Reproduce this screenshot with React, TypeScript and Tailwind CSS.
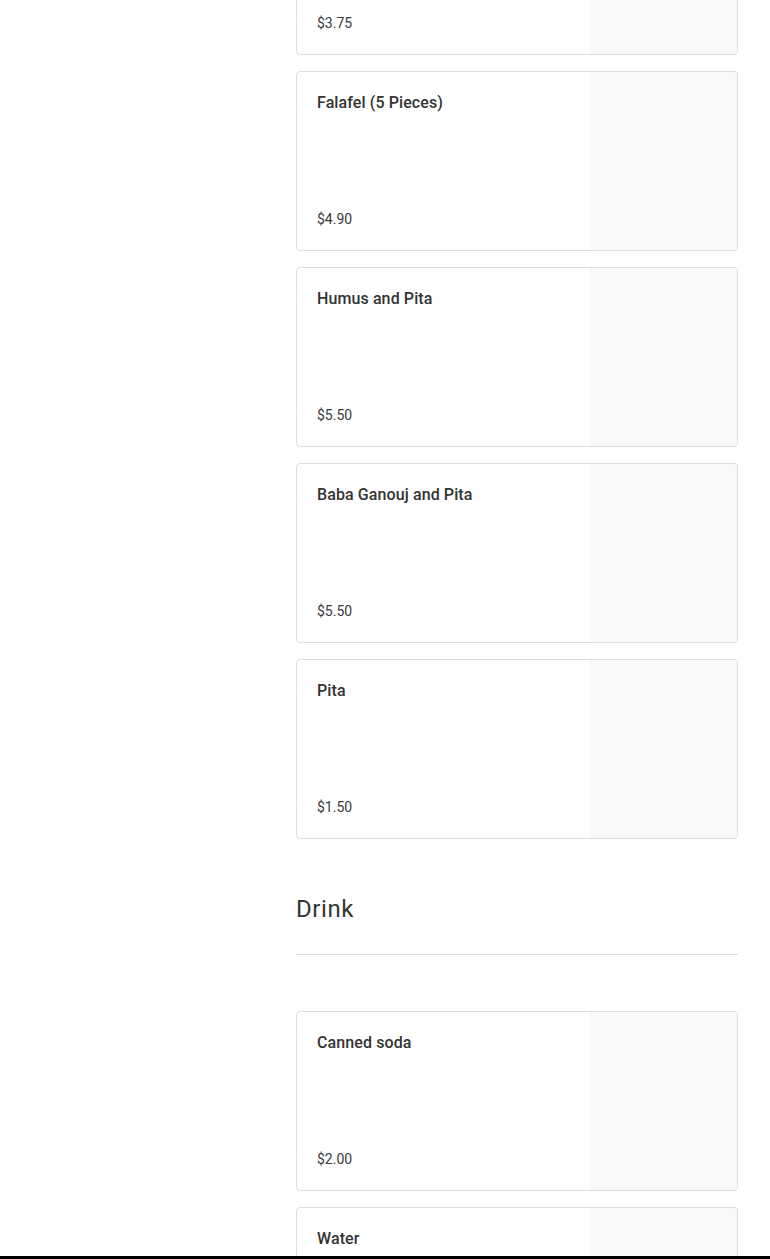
const food = [
  { name: "Shawarma Wrap", price: "$3.75" },
  { name: "Falafel (5 Pieces)", price: "$4.90" },
  { name: "Humus and Pita", price: "$5.50" },
  { name: "Baba Ganouj and Pita", price: "$5.50" },
  { name: "Pita", price: "$1.50" },
];

const drinks = [
  { name: "Canned soda", price: "$2.00" },
  { name: "Water", price: "$1.00" },
];

function ItemCard({ name, price }: { name: string; price: string }) {
  return (
    <div className="flex h-[180px] w-full rounded-[4px] border border-[#dedede] bg-white">
      <div className="flex flex-1 flex-col justify-between p-5 pt-[21px] pb-[21px]">
        <h3 className="text-base font-medium leading-5 tracking-[0.1px] text-[#333]">{name}</h3>
        <p className="text-sm leading-5 text-[#3a3a3a]">{price}</p>
      </div>
      <div className="w-[147px] rounded-r-[4px] bg-[#f8f9fb]"></div>
    </div>
  );
}

export default function App() {
  return (
    <div
      className="relative h-[1259px] overflow-hidden bg-white"
      style={{ fontFamily: "Roboto, 'Noto Sans', sans-serif" }}
    >
      <div className="ml-[296px] mr-[32px] -mt-[125px]">
        <div className="flex flex-col gap-4">
          {food.map((item) => (
            <ItemCard key={item.name} {...item} />
          ))}
        </div>

        {/* Drink Section */}
        <div className="pt-[52px]">
          <h2 className="text-2xl font-normal leading-9 tracking-wide text-[#333]">Drink</h2>
          <div className="mt-[27px] border-b border-[#dcdcdc]"></div>
        </div>

        <div className="mt-[56px] flex flex-col gap-4">
          {drinks.map((item) => (
            <ItemCard key={item.name} {...item} />
          ))}
        </div>
      </div>

      <div className="absolute bottom-0 left-0 right-0 h-[3px] bg-black"></div>
    </div>
  );
}
